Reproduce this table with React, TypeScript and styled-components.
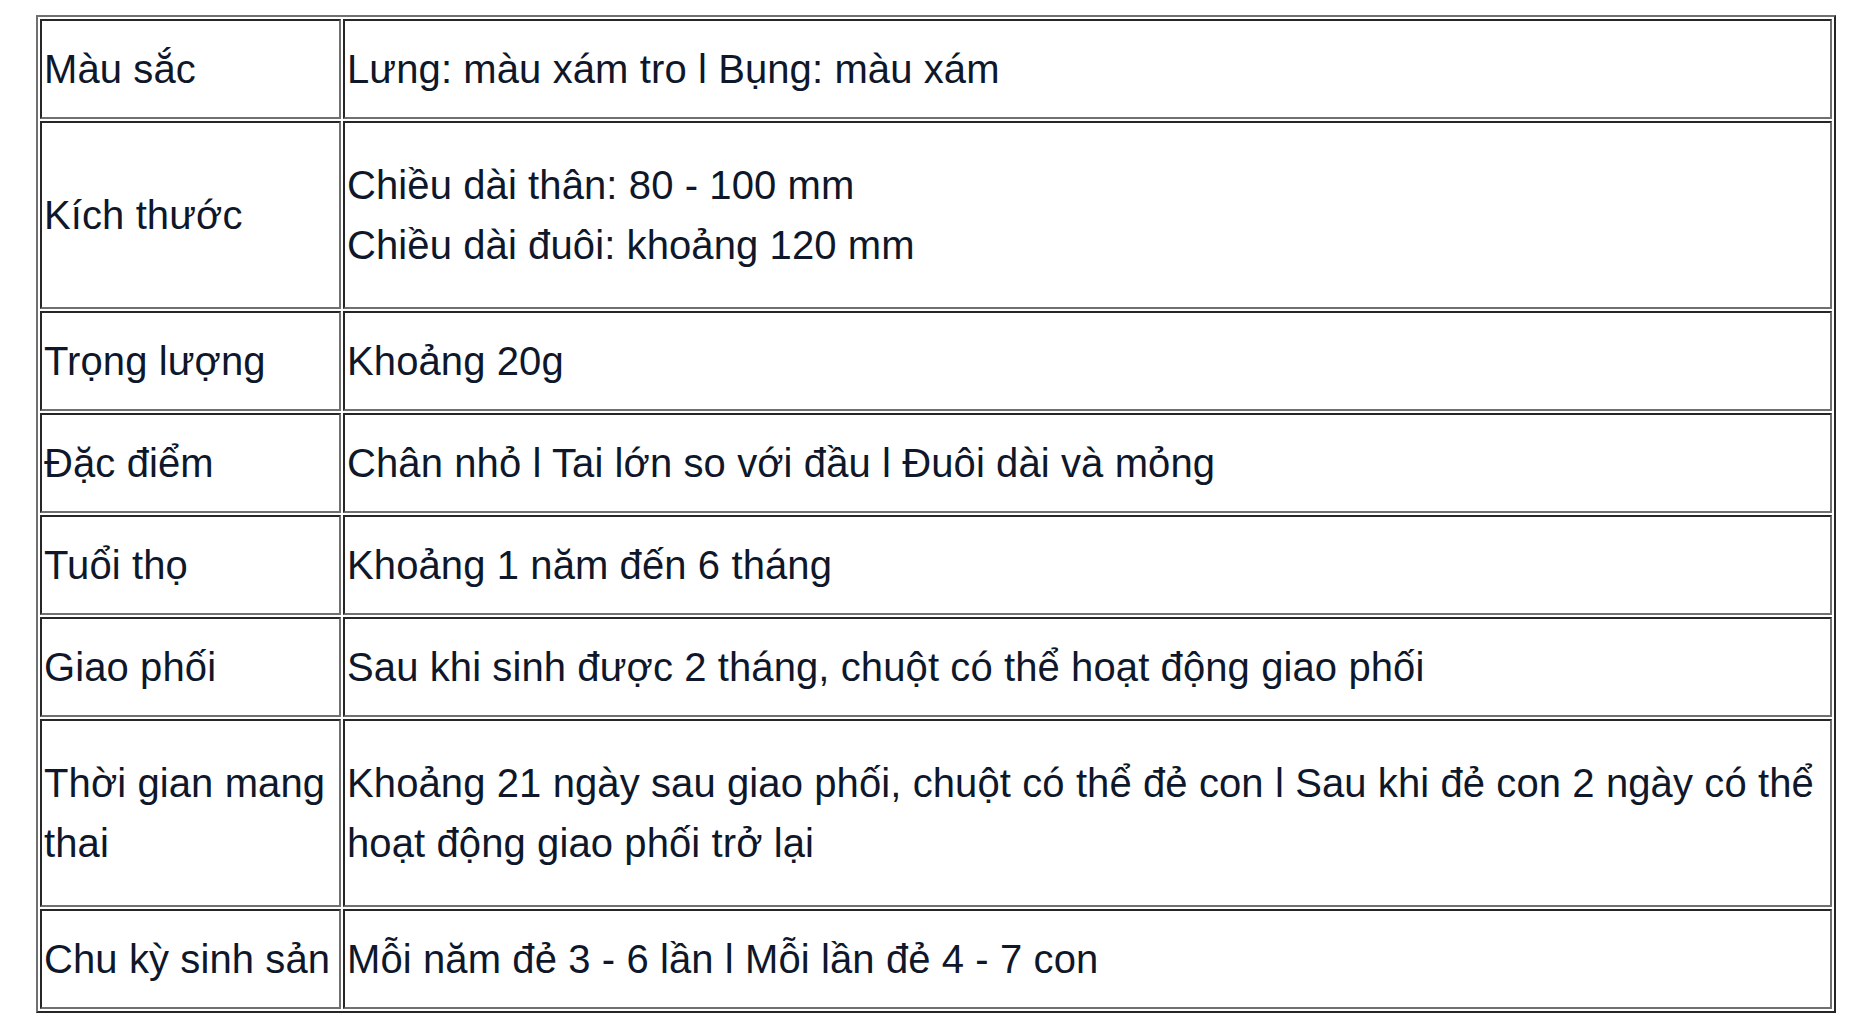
import React from "react";
import styled, { createGlobalStyle } from "styled-components";

interface SpecRow {
  label: string;
  lines: string[];
  tall?: boolean;
}

const rows: SpecRow[] = [
  { label: "Màu sắc", lines: ["Lưng: màu xám tro l Bụng: màu xám"] },
  {
    label: "Kích thước",
    lines: ["Chiều dài thân: 80 - 100 mm", "Chiều dài đuôi: khoảng 120 mm"],
    tall: true,
  },
  { label: "Trọng lượng", lines: ["Khoảng 20g"] },
  { label: "Đặc điểm", lines: ["Chân nhỏ l Tai lớn so với đầu l Đuôi dài và mỏng"] },
  { label: "Tuổi thọ", lines: ["Khoảng 1 năm đến 6 tháng"] },
  {
    label: "Giao phối",
    lines: ["Sau khi sinh được 2 tháng, chuột có thể hoạt động giao phối"],
  },
  {
    label: "Thời gian mang thai",
    lines: [
      "Khoảng 21 ngày sau giao phối, chuột có thể đẻ con l Sau khi đẻ con 2 ngày có thể hoạt động giao phối trở lại",
    ],
    tall: true,
  },
  { label: "Chu kỳ sinh sản", lines: ["Mỗi năm đẻ 3 - 6 lần l Mỗi lần đẻ 4 - 7 con"] },
];

const App = () => {
  return (
    <>
      <GlobalStyle />
      <Page>
        <SpecTable>
          <tbody>
            {rows.map((row) => (
              <Row key={row.label} $tall={row.tall}>
                <LabelCell>{row.label}</LabelCell>
                <ValueCell>
                  {row.lines.map((line, i) => (
                    <React.Fragment key={line}>
                      {i > 0 && <br />}
                      {line}
                    </React.Fragment>
                  ))}
                </ValueCell>
              </Row>
            ))}
          </tbody>
        </SpecTable>
      </Page>
    </>
  );
};

export default App;

const GlobalStyle = createGlobalStyle`
  body {
    margin: 0;
    background: #ffffff;
    font-family: "Liberation Sans", Arial, Helvetica, sans-serif;
  }
`;

const Page = styled.div`
  padding: 15px 22px 0 36px;
`;

const SpecTable = styled.table`
  width: 1800px;
  border-collapse: separate;
  border-spacing: 2px;
  border-style: solid;
  border-width: 2px;
  border-color: #707070 #262626 #262626 #707070;
`;

const Row = styled.tr<{ $tall?: boolean }>`
  height: ${({ $tall }) => ($tall ? "188px" : "100px")};
`;

const Cell = styled.td`
  padding: 2px;
  border-style: solid;
  border-width: 2px;
  border-color: #262626 #707070 #707070 #262626;
  vertical-align: middle;
  font-size: 40px;
  letter-spacing: 0.1px;
  line-height: 60px;
  color: #0f172a;
  text-align: left;
`;

const LabelCell = styled(Cell)`
  width: 293px;
`;

const ValueCell = styled(Cell)``;
